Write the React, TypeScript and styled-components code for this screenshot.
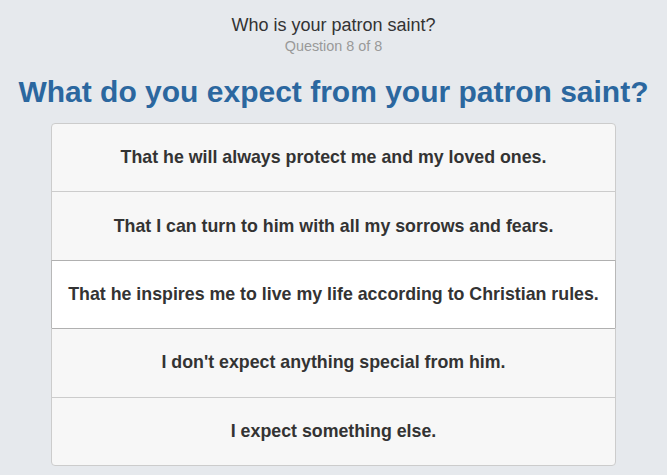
import React from "react";
import styled, { createGlobalStyle } from "styled-components";

const Global = createGlobalStyle`
  html, body { margin: 0; padding: 0; background: #e6e9ed; }
  body { font-family: "Liberation Sans", Arial, sans-serif; color: #333; }
`;

const Page = styled.div`
  display: flex;
  flex-direction: column;
  align-items: center;
  padding-top: 14px;
`;

const QuizTitle = styled.div`
  font-size: 18px;
  line-height: 22px;
  color: #333;
`;

const Progress = styled.div`
  font-size: 14.4px;
  line-height: 16px;
  color: #999;
  margin-top: 2px;
`;

const Question = styled.h1`
  margin: 20px 0 13px;
  font-size: 30px;
  line-height: 36px;
  font-weight: bold;
  color: #2b679f;
  text-align: center;
`;

const List = styled.div`
  width: 563px;
  display: flex;
  flex-direction: column;
  border: 1px solid #ccc;
  border-radius: 4px;
  background: #f7f7f7;
`;

const Answer = styled.div<{ $active?: boolean; $first?: boolean }>`
  height: 67.4px;
  display: flex;
  align-items: center;
  justify-content: center;
  font-size: 17.8px;
  font-weight: bold;
  color: #333;
  border-top: ${(p) => (p.$first ? "none" : "1px solid #ccc")};
  background: ${(p) => (p.$active ? "#fff" : "transparent")};
  ${(p) =>
    p.$active &&
    `
    border-top: 1px solid #b0b0b0;
    box-shadow: 0 1px 0 #b0b0b0, -1px 0 0 #b8b8b8, 1px 0 0 #b8b8b8;
    position: relative;
    z-index: 1;
  `}
`;

const answers = [
  "That he will always protect me and my loved ones.",
  "That I can turn to him with all my sorrows and fears.",
  "That he inspires me to live my life according to Christian rules.",
  "I don't expect anything special from him.",
  "I expect something else.",
];

export default function App() {
  return (
    <>
      <Global />
      <Page>
        <QuizTitle>Who is your patron saint?</QuizTitle>
        <Progress>Question 8 of 8</Progress>
        <Question>What do you expect from your patron saint?</Question>
        <List>
          {answers.map((a, i) => (
            <Answer key={i} $first={i === 0} $active={i === 2}>
              {a}
            </Answer>
          ))}
        </List>
      </Page>
    </>
  );
}
